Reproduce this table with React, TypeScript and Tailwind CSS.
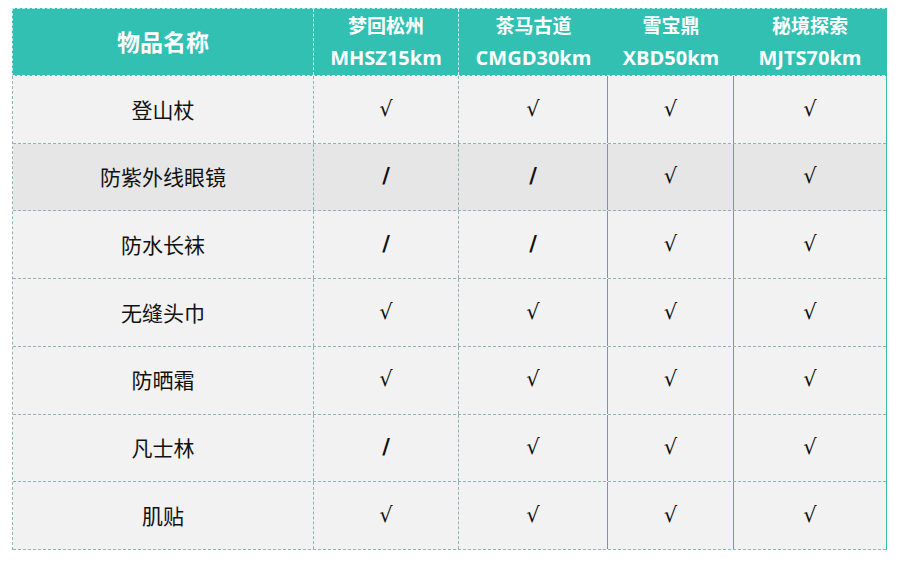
import React from "react";

const cols = [
  { zh: "梦回松州", en: "MHSZ15km" },
  { zh: "茶马古道", en: "CMGD30km" },
  { zh: "雪宝鼎", en: "XBD50km" },
  { zh: "秘境探索", en: "MJTS70km" },
];

const rows: { name: string; v: string[]; dark?: boolean }[] = [
  { name: "登山杖", v: ["√", "√", "√", "√"] },
  { name: "防紫外线眼镜", v: ["/", "/", "√", "√"], dark: true },
  { name: "防水长袜", v: ["/", "/", "√", "√"] },
  { name: "无缝头巾", v: ["√", "√", "√", "√"] },
  { name: "防晒霜", v: ["√", "√", "√", "√"] },
  { name: "凡士林", v: ["/", "√", "√", "√"] },
  { name: "肌贴", v: ["√", "√", "√", "√"] },
];

const font = { fontFamily: "'Open Sans','Noto Sans CJK SC',sans-serif" };

function Mark({ v }: { v: string }) {
  if (v === "/") {
    return (
      <span className="text-[21px] font-bold text-[#111]" style={{ fontFamily: "'DejaVu Sans',sans-serif" }}>
        /
      </span>
    );
  }
  return (
    <span className="text-[21px] text-[#111]" style={{ fontFamily: "'DejaVu Sans','Noto Sans CJK SC',sans-serif" }}>
      √
    </span>
  );
}

export default function App() {
  return (
    <div className="w-[898px] h-[563px] bg-white pt-[8px] pl-[12px]" style={font}>
      <div className="w-[875px] border-r-2 border-r-[#34bfb1]">
        <div className="grid grid-cols-[301px_145px_149px_126px_152px] h-[68px] bg-[#31c0b2] border-t border-dashed border-t-[#bfeae5] border-l border-l-[#bfeae5] border-b border-b-[#dff5f2] text-white font-bold">
          <div className="flex items-center justify-center text-[23px] border-r border-dashed border-r-[#d5f2ef]">
            物品名称
          </div>
          {cols.map((c, i) => (
            <div
              key={c.en}
              className={
                "flex flex-col items-center justify-center text-[19px] leading-[32px] " +
                (i < 1 ? "border-r border-dashed border-r-[#d5f2ef]" : "")
              }
            >
              <span>{c.zh}</span>
              <span className="text-[20px]">{c.en}</span>
            </div>
          ))}
        </div>
        <div className="grid grid-rows-[repeat(7,1fr)] h-[474px] border-l border-dashed border-l-[#8fb3b8]">
          {rows.map((r) => (
            <div
              key={r.name}
              className={
                "grid grid-cols-[301px_145px_149px_126px_152px] border-b border-dashed border-b-[#8fb3b8] " +
                (r.dark ? "bg-[#e6e6e6]" : "bg-[#f2f2f2]")
              }
            >
              <div className="flex items-center justify-center text-[21px] text-[#111] border-r border-dashed border-r-[#8fb3b8]" style={{ fontFamily: "'Noto Sans CJK SC',sans-serif" }}>
                {r.name}
              </div>
              <div className="flex items-center justify-center border-r border-dashed border-r-[#8fb3b8]">
                <Mark v={r.v[0]} />
              </div>
              <div className="flex items-center justify-center border-r border-solid border-r-[#3bb5aa]">
                <Mark v={r.v[1]} />
              </div>
              <div className="flex items-center justify-center border-r border-solid border-r-[#3bb5aa]">
                <Mark v={r.v[2]} />
              </div>
              <div className="flex items-center justify-center">
                <Mark v={r.v[3]} />
              </div>
            </div>
          ))}
        </div>
      </div>
    </div>
  );
}
